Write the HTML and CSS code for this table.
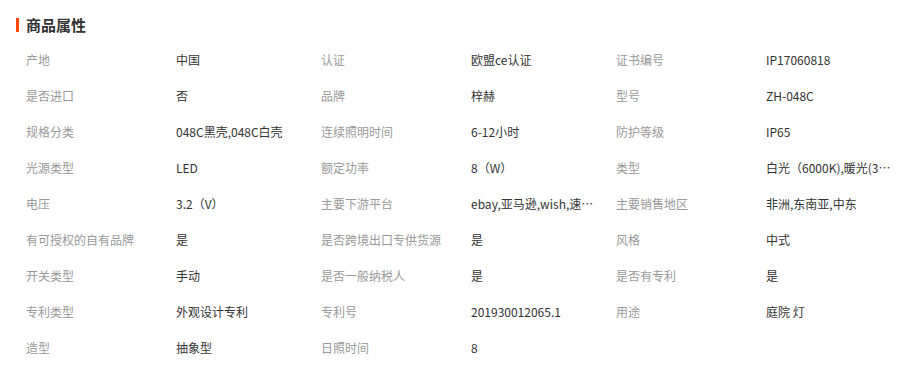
FILE: index.html
```html
<!DOCTYPE html>
<html lang="zh">
<head>
<meta charset="utf-8">
<link rel="stylesheet" href="styles.css">
</head>
<body>
<div class="panel">
  <div class="head"><span class="bar"></span><h2 class="title">商品属性</h2></div>
  <ul class="attrs">
    <li class="attr"><span class="k">产地</span><span class="v">中国</span></li>
    <li class="attr"><span class="k">认证</span><span class="v">欧盟ce认证</span></li>
    <li class="attr"><span class="k">证书编号</span><span class="v">IP17060818</span></li>
    <li class="attr"><span class="k">是否进口</span><span class="v">否</span></li>
    <li class="attr"><span class="k">品牌</span><span class="v">梓赫</span></li>
    <li class="attr"><span class="k">型号</span><span class="v">ZH-048C</span></li>
    <li class="attr"><span class="k">规格分类</span><span class="v">048C黑壳,048C白壳</span></li>
    <li class="attr"><span class="k">连续照明时间</span><span class="v">6-12小时</span></li>
    <li class="attr"><span class="k">防护等级</span><span class="v">IP65</span></li>
    <li class="attr"><span class="k">光源类型</span><span class="v">LED</span></li>
    <li class="attr"><span class="k">额定功率</span><span class="v">8（W）</span></li>
    <li class="attr"><span class="k">类型</span><span class="v">白光（6000K),暖光(3000K)</span></li>
    <li class="attr"><span class="k">电压</span><span class="v">3.2（V）</span></li>
    <li class="attr"><span class="k">主要下游平台</span><span class="v">ebay,亚马逊,wish,速卖通,独立站</span></li>
    <li class="attr"><span class="k">主要销售地区</span><span class="v">非洲,东南亚,中东</span></li>
    <li class="attr"><span class="k">有可授权的自有品牌</span><span class="v">是</span></li>
    <li class="attr"><span class="k">是否跨境出口专供货源</span><span class="v">是</span></li>
    <li class="attr"><span class="k">风格</span><span class="v">中式</span></li>
    <li class="attr"><span class="k">开关类型</span><span class="v">手动</span></li>
    <li class="attr"><span class="k">是否一般纳税人</span><span class="v">是</span></li>
    <li class="attr"><span class="k">是否有专利</span><span class="v">是</span></li>
    <li class="attr"><span class="k">专利类型</span><span class="v">外观设计专利</span></li>
    <li class="attr"><span class="k">专利号</span><span class="v">201930012065.1</span></li>
    <li class="attr"><span class="k">用途</span><span class="v">庭院 灯</span></li>
    <li class="attr"><span class="k">造型</span><span class="v">抽象型</span></li>
    <li class="attr"><span class="k">日照时间</span><span class="v">8</span></li>
  </ul>
</div>
</body>
</html>
```
FILE: styles.css
```css
* { box-sizing: border-box; }
html, body { margin: 0; padding: 0; background: #fff; }
body {
  font-family: "Noto Sans CJK SC", "Noto Sans", sans-serif;
  font-size: 12px;
  color: #333;
}
.panel { width: 911px; }
.head {
  display: flex;
  align-items: center;
  padding: 16px 0 8px 16px;
  height: 42px;
}
.bar {
  display: block;
  width: 3px;
  height: 14px;
  background: #ff4400;
  margin-right: 7px;
}
.title {
  margin: 0;
  font-size: 15px;
  font-weight: bold;
  line-height: 18px;
  color: #333;
}
.attrs {
  list-style: none;
  margin: 0;
  padding: 0 0 0 26px;
  display: grid;
  grid-template-columns: repeat(3, 295px);
}
.attr {
  display: flex;
  height: 36px;
  line-height: 36px;
}
.k {
  flex: 0 0 150px;
  color: #999;
  white-space: nowrap;
}
.v {
  width: 125px;
  white-space: nowrap;
  overflow: hidden;
  text-overflow: ellipsis;
  color: #333;
}
```
